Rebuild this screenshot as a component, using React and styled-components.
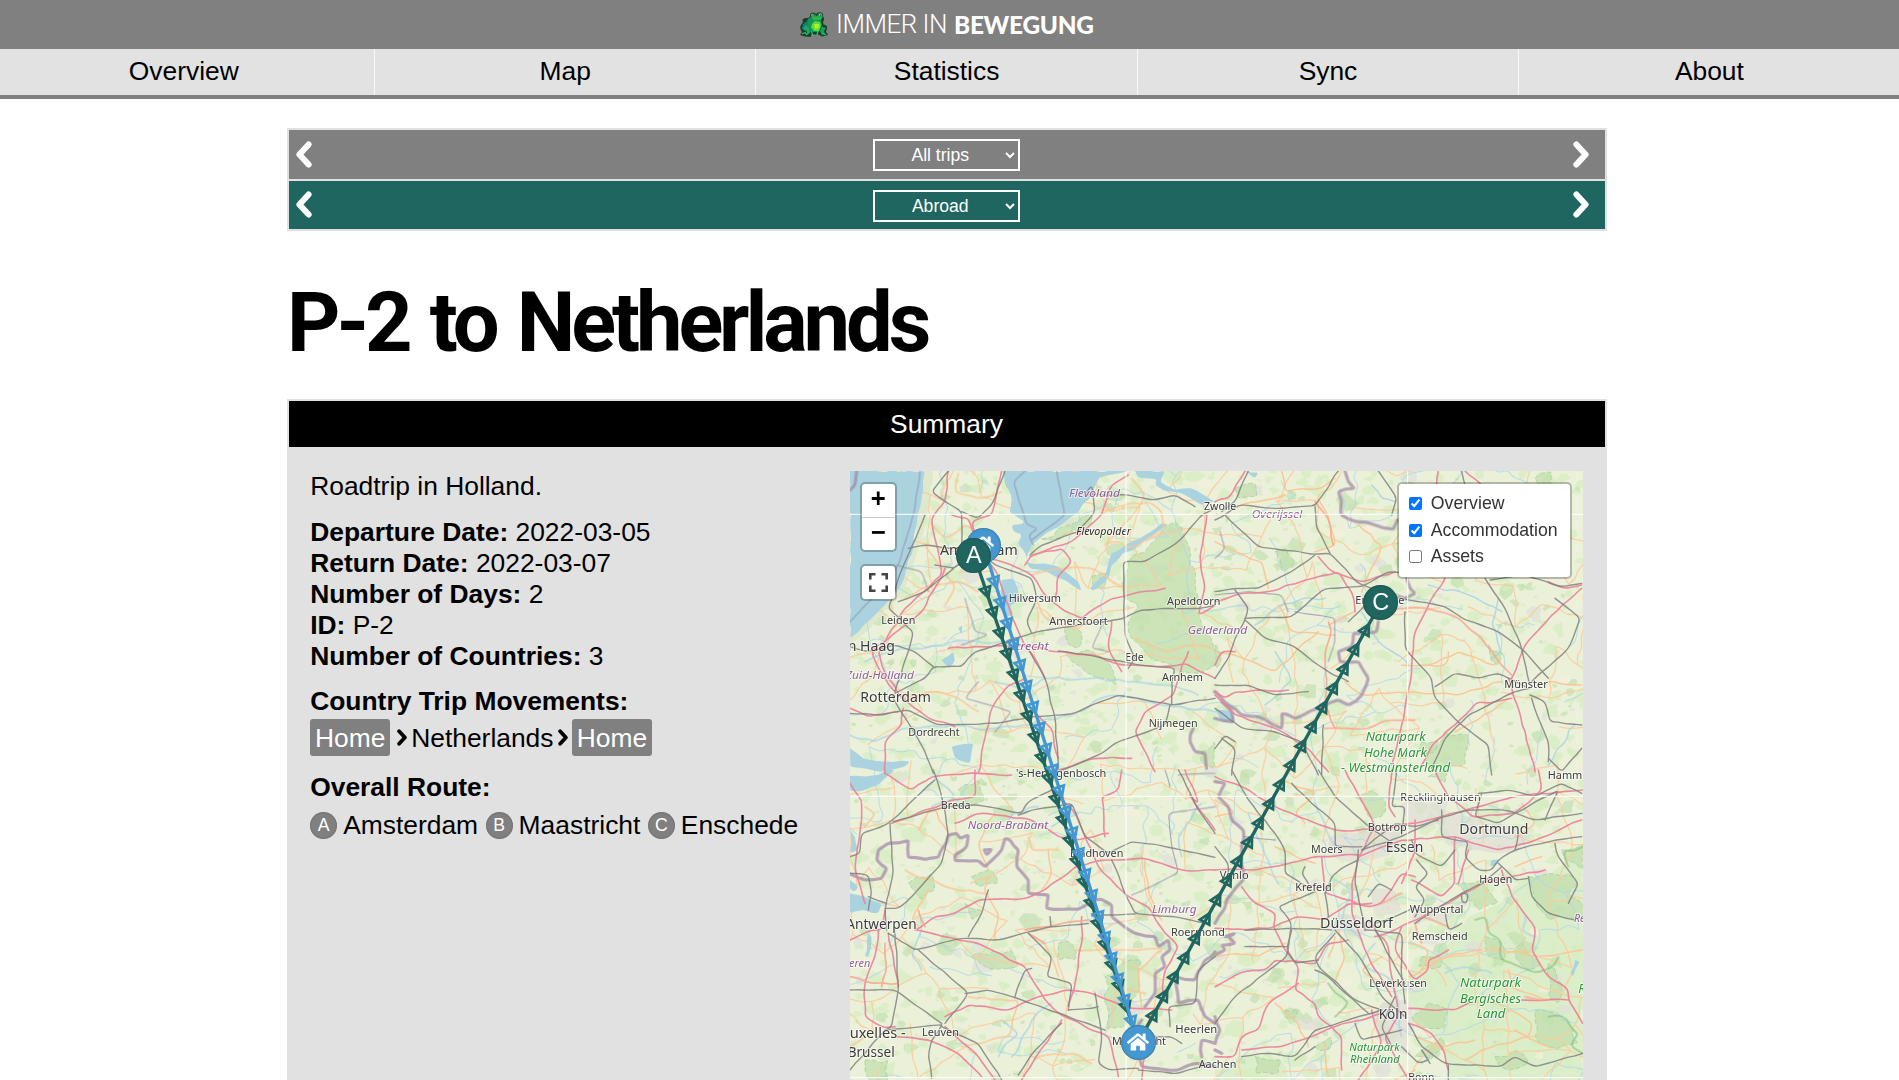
import React from "react";
import styled, { createGlobalStyle, css } from "styled-components";
import { FaHome } from "react-icons/fa";

const GREY = "#808080";
const LIGHT = "#e1e1e1";
const TEAL = "#1f6660";
const BLUE = "#4497d1";

const GlobalStyle = createGlobalStyle`
  * { box-sizing: border-box; }
  html, body { margin: 0; padding: 0; height: 1080px; overflow: hidden; background: #fff; }
  body { font-family: "Liberation Sans", Arial, sans-serif; font-size: 26.4px; color: #000; }
`;

const Page = styled.div`
  height: 1080px;
  overflow: hidden;
`;

const Header = styled.header`
  height: 49px;
  background: ${GREY};
  color: #fff;
  display: flex;
  justify-content: center;
  align-items: center;
  padding-right: 6px;
`;

const Brand = styled.div`
  display: flex;
  align-items: center;
  white-space: pre;
`;

const BrandLight = styled.span`
  font: 300 26px/49px Roboto, sans-serif;
  width: 111px;
  margin: 0 7px 0 7px;
  letter-spacing: -0.5px;
`;

const BrandBold = styled.span`
  font: 900 24.4px/49px Lato, sans-serif;
  width: 140px;
  margin-top: 0;
  letter-spacing: -0.3px;
`;

const Nav = styled.nav`
  height: 50px;
  background: #e2e2e2;
  border-bottom: 4px solid ${GREY};
  overflow: hidden;
`;

const NavList = styled.div`
  display: grid;
  grid-template-columns: repeat(5, 381.4px);
  margin-left: -6.4px;
  height: 46px;
`;

const NavItem = styled.a`
  text-align: center;
  line-height: 44px;
  border-right: 1px solid #f8f8f8;
`;

const Content = styled.main`
  width: 1320px;
  margin: 29px 0 0 287px;
`;

const Switcher = styled.div`
  background: ${LIGHT};
  padding: 2px;
  display: grid;
  grid-template-rows: 49px 48px;
  row-gap: 2px;
`;

const SwitchRow = styled.div`
  background: ${(p) => p.$color};
  display: flex;
  justify-content: space-between;
  align-items: flex-start;
  padding: 9px 16px 0 6.5px;
`;

const Select = styled.select`
  width: 147px;
  height: 32px;
  border: 2px solid #fff;
  border-radius: 0;
  background: transparent;
  color: #fff;
  font: 17.6px "Liberation Sans", Arial, sans-serif;
  text-align: center;
  margin: 0 0 0 8px;
`;

const Title = styled.h1`
  margin: 43px 0 0 0;
  padding-top: 1px;
  height: 125px;
  font: 700 83px/96px Roboto, sans-serif;
  letter-spacing: -4.1px;
  word-spacing: 4.8px;
  white-space: nowrap;
`;

const Card = styled.section`
  background: ${LIGHT};
  padding: 2px;
  height: 720px;
`;

const CardTitle = styled.h2`
  margin: 0;
  height: 46px;
  padding-right: 1px;
  background: #000;
  color: #fff;
  font: 26.4px/46px "Liberation Sans", Arial, sans-serif;
  text-align: center;
`;

const CardBody = styled.div`
  display: grid;
  grid-template-columns: 539.6px 733px;
  padding: 24px 0 0 21.2px;
`;

const Facts = styled.div`
  line-height: 31px;
  white-space: nowrap;
`;

const Block = styled.div`
  margin-bottom: 14.5px;
`;

const Movements = styled.div`
  display: flex;
  align-items: center;
  height: 37px;
  margin: 2px 0 16px;
`;

const Tag = styled.span`
  background: ${GREY};
  color: #fff;
  border-radius: 3px;
  padding: 0 4.8px;
  height: 37px;
  line-height: 38px;
`;

const Place = styled.span`
  padding-top: 1px;
`;

const Route = styled.div`
  display: flex;
  align-items: center;
  height: 31px;
  margin-top: 7px;
`;

const Letter = styled.span`
  width: 27px;
  height: 27px;
  border-radius: 50%;
  background: ${GREY};
  box-shadow: inset 0 0 2px rgba(0, 0, 0, 0.35);
  color: #fff;
  font-size: 17.6px;
  line-height: 27px;
  text-align: center;
  margin-right: 6px;
`;

const Stop = styled.span`
  margin-right: 7.5px;
`;

const MapFrame = styled.div`
  position: relative;
  width: 733px;
  height: 609px;
  overflow: hidden;
  background: #eff1d9;
`;

const MapSvg = styled.svg`
  display: block;
`;

const Pin = styled.div`
  position: absolute;
  left: ${(p) => p.$x - 17.5}px;
  top: ${(p) => p.$y - 17.5}px;
  width: 35px;
  height: 35px;
  border-radius: 50%;
  background: ${(p) => p.$color};
  box-shadow: inset 0 0 2px rgba(0, 0, 0, 0.5);
  color: #fff;
  font-size: 23.5px;
  line-height: 35px;
  display: flex;
  justify-content: center;
  align-items: center;
`;

const control = css`
  position: absolute;
  background: #fff;
  background-clip: padding-box;
  border: 2px solid rgba(0, 0, 0, 0.24);
  border-radius: 5px;
`;

const Zoom = styled.div`
  ${control}
  left: 10px;
  top: 11px;
  width: 37px;
  height: 70px;
`;

const ZoomButton = styled.div`
  height: 33px;
  font: 700 24px/29px "DejaVu Sans Mono", monospace;
  text-align: center;
  & + & { border-top: 1px solid #ccc; }
`;

const Fullscreen = styled.div`
  ${control}
  left: 10px;
  top: 93px;
  width: 37px;
  height: 37px;
  display: flex;
  justify-content: center;
  align-items: center;
`;

const Layers = styled.div`
  ${control}
  left: 547px;
  top: 11px;
  width: 175px;
  height: 97px;
  padding: 6.6px 0 0 10px;
  display: flex;
  flex-direction: column;
`;

const Layer = styled.label`
  display: flex;
  align-items: center;
  height: 26.5px;
  font-size: 17.7px;
  color: #333;
  gap: 9px;
  input { margin: 0; width: 13px; height: 13px; }
`;

const Chevron = ({ right, small }) => (
  <svg width={small ? 10 : 16} height={small ? 17 : 27} viewBox="0 0 16 27">
    <path
      d={right ? "M3.4 3.4 L12.6 13.5 L3.4 23.6" : "M12.6 3.4 L3.4 13.5 L12.6 23.6"}
      fill="none"
      stroke={small ? "#000" : "#fff"}
      strokeWidth="6"
      strokeLinecap="round"
      strokeLinejoin="round"
    />
  </svg>
);

const Arrow = styled.span`
  display: flex;
  margin-top: ${(p) => p.$top}px;
`;

const Frog = () => (
  <svg width="30" height="27" viewBox="0 0 30 27">
    <path d="M4 11 Q2 7.5 7 7 Q11 7 11 5 Q11 1.5 14 1.5 Q16 1.5 17 3 Q19 .5 22 1.5 Q25 2.5 24 5 Q26 8 24 11 L24.5 13.5 Q29 14 28 18 Q26 21 28 22 L29 24 L23 25.5 L19 23.5 L12 23.5 L12 26 L6 25.5 L1 24 L3 21 Q0 17 2 14 Z" fill="#17402a" />
    <path d="M12 6 L12 3.4 L16 3.4 L18 5 L19 2.6 L23 2.6 L24 6 L22 9 L23 14 L20 21 L12 21 L8 17 L7 12 L9 8 Z" fill="#12935a" />
    <path d="M13 5.6 L23 5.6 L21.5 9 L14 9 Z" fill="#2fb54a" />
    <path d="M13 13 L16 10 L21 11 L22 15 L20 20 L15 20 L12 16.5 Z" fill="#62d92f" />
    <path d="M15 13 L20 13 L20 17 L16 18 Z" fill="#a5f13c" />
    <path d="M4 13 L9 9.5 L9 15 L12 20 L8 21 L3 18 Z" fill="#12806d" />
    <path d="M7 14 L10 17 L11 22 L8 24 L8 19.5 L4 18 Z" fill="#1fa862" />
    <path d="M23 15.5 L27 17 L25 20 L26 23 L23 24 L21 20 Z" fill="#15a25e" />
    <path d="M3 23 L6 21.5 L8 24 M12 20 L14 24 M19 20 L18 24 M23 22 L27 24" stroke="#2bbd63" strokeWidth="1.3" fill="none" />
    <circle cx="13.8" cy="4" r="1.3" fill="#cfe7b0" />
    <circle cx="21.3" cy="3.8" r="1.3" fill="#cfe7b0" />
    <circle cx="14" cy="4.1" r=".8" fill="#102a18" />
    <circle cx="21.5" cy="4" r=".8" fill="#102a18" />
  </svg>
);

/* ---------- map drawing: each sheet is a quarter of the canvas ---------- */

const parse = (s) => s.trim().split(/\s+/).map((p) => p.split(",").map(Number));

/* Rounds only the corners of a polyline, by at most `radius`. */
const smooth = (pts, radius = 22) => {
  let d = `M${pts[0][0]} ${pts[0][1]}`;
  const toward = (a, b) => {
    const len = Math.hypot(b[0] - a[0], b[1] - a[1]) || 1;
    const k = Math.min(radius / len, 0.5);
    return `${(a[0] + (b[0] - a[0]) * k).toFixed(1)} ${(a[1] + (b[1] - a[1]) * k).toFixed(1)}`;
  };
  for (let i = 1; i < pts.length - 1; i++) {
    d += `L${toward(pts[i], pts[i - 1])}Q${pts[i].join(" ")} ${toward(pts[i], pts[i + 1])}`;
  }
  return d + `L${pts[pts.length - 1].join(" ")}`;
};

const makeRandom = (seed) => () => {
  seed = (seed * 1664525 + 1013904223) % 4294967296;
  return seed / 4294967296;
};

/* Adds small irregular bends so that long segments read as surveyed lines. */
const roughen = (pts, amp, seed) => {
  const rnd = makeRandom(seed + pts[0][0] * 7 + pts[0][1] * 13);
  const out = [pts[0]];
  for (let i = 1; i < pts.length; i++) {
    const [a, b] = [pts[i - 1], pts[i]];
    const n = Math.max(1, Math.round(Math.hypot(b[0] - a[0], b[1] - a[1]) / 26));
    for (let j = 1; j < n; j++) {
      out.push([
        Math.round(a[0] + ((b[0] - a[0]) * j) / n + (rnd() - 0.5) * amp),
        Math.round(a[1] + ((b[1] - a[1]) * j) / n + (rnd() - 0.5) * amp),
      ]);
    }
    out.push(b);
  }
  return out;
};

const blobs = (() => {
  const rnd = makeRandom(11);
  return Array.from({ length: 2600 }, () => {
    const x = 15 + rnd() * 2200;
    const y = 18 + rnd() * 1830;
    const r = 4 + rnd() * rnd() * 22;
    const pts = Array.from({ length: 7 }, (_, i) => {
      const a = (i / 7) * Math.PI * 2;
      const q = r * (0.5 + rnd());
      return `${Math.round(x + Math.cos(a) * q * 1.3)},${Math.round(y + Math.sin(a) * q)}`;
    });
    const pick = rnd();
    return { pts: pts.join(" "), fill: pick < 0.74 ? "#d5ecc1" : pick < 0.87 ? "#c3dfb0" : pick < 0.94 ? "#e0deda" : "#f4f0dc" };
  });
})();

const lattice = (seed, step, amp, keep) => {
  const rnd = makeRandom(seed);
  const cols = Math.ceil(2300 / step);
  const rows = Math.ceil(1950 / step);
  const grid = [];
  for (let j = 0; j <= rows; j++) {
    grid.push([]);
    for (let i = 0; i <= cols; i++) {
      grid[j].push([Math.round(i * step + (rnd() - 0.5) * step), Math.round(j * step + (rnd() - 0.5) * step)]);
    }
  }
  const out = [];
  const add = (a, b) => out.push(smooth(roughen([a, b], amp, out.length), 12));
  for (let j = 0; j < rows; j++) {
    for (let i = 0; i < cols; i++) {
      if (rnd() < keep) add(grid[j][i], grid[j][i + 1]);
      if (rnd() < keep) add(grid[j][i], grid[j + 1][i]);
    }
  }
  return out;
};

const lanes = lattice(5, 112, 15, 0.5);
const streams = lattice(29, 130, 24, 0.34);

const sheets = [
  {
    at: [0, 0],
    green: [
      "850,290 900,262 950,200 990,170 1030,240 1050,350 1062,450 1110,560 1112,600 1060,625 1000,620 950,590 900,560 850,500 880,420 838,400 835,340",
      "660,560 740,558 780,580 815,660 760,640 720,620 680,590",
      "590,222 640,190 740,150 740,175 670,205 620,225",
      "1070,860 1110,830 1110,910 1080,900", "740,335 780,320 780,370 745,370", "660,480 710,500 700,550 670,540",
    ],
    dunes: ["240,18 262,18 250,120 235,200 215,270 190,340 160,400 110,450 15,545 15,515 100,440 150,390 180,330 205,240 218,150 235,75"],
    water: [
      "15,18 240,18 235,75 218,150 205,240 180,330 150,390 100,440 15,520",
      "474,18 480,60 500,100 493,140 540,172 500,180 505,200 530,208 520,240 545,275 540,290 560,240 590,215 650,180 700,140 735,100 752,60 765,35 850,18",
      "870,18 960,18 945,50 990,75 1040,70 1110,110 1070,120 1010,85 960,78 930,60 935,42 880,38",
      "545,292 600,295 640,305 700,350 710,378 660,345 610,322 555,312",
      "800,265 840,240 900,210 950,175 970,180 900,225 860,258 835,262 800,300 790,340 745,378 735,370 780,330",
      "470,345 505,340 520,375 520,410 495,420 505,450 480,455 465,430", "290,585 325,560 330,590 310,610", "320,845 385,835 375,895 330,880",
      "15,850 55,880 115,890 195,890 180,905 100,920 15,905", "300,330 312,320 308,345", "340,490 352,480 350,510",
    ],
    rail: [
      "500,590 480,530 560,505 700,480 830,462 890,435 960,430 1060,430 1110,420", "270,300 330,310 350,290 240,380 160,410", "150,680 190,560 205,500 130,430 160,340 240,150",
      "150,685 240,640 265,605 350,605 390,560 500,525", "560,505 545,470 575,400 560,340 450,300 380,245", "15,745 110,750 190,735 280,780 450,775 560,755 690,745 740,720 820,690 980,720 1110,700",
      "980,720 980,650 990,610 880,600 740,572 640,558", "850,610 870,580 840,510 835,290 900,290 1000,230 1070,150 1110,130", "640,910 630,760 600,640 555,560", "190,250 240,240 320,250", "265,925 240,860 200,790 140,690",
      "700,200 750,140 740,60 720,90 850,90 920,105 990,90 1050,125", "640,920 760,870 820,830 880,810 960,780 975,720", "310,18 260,80 350,140 350,240", "480,18 440,120 400,160 350,140", "555,270 590,240 700,200", "15,545 70,560 150,540 210,560 265,605",
    ],
    motor: [
      "310,18 300,110 260,160 265,200 290,330 180,430 100,560 110,600 160,690 250,760 330,785", "470,18 440,150 380,170 400,230 420,260", "400,270 500,300 560,330 600,390 660,440 710,460", "420,280 460,330 480,400 520,500 600,640",
      "310,550 410,545 520,540 640,560 750,570 830,600 950,605 1020,595 1110,640", "630,400 640,330 680,290 650,250 560,270 540,300", "555,275 680,230 770,150 800,60 850,30", "710,460 800,400 850,390 960,370", "800,470 790,550 830,620",
      "120,925 120,830 170,780 175,730", "15,730 70,755 160,740", "400,925 420,820 440,730 490,660 540,640", "1085,150 1065,270 1080,370 1060,450 1110,420", "640,915 750,880 860,880", "930,920 870,800 900,740 985,690 1010,600 1030,560", "560,730 620,790 640,880", "150,680 100,610 80,560 180,480 230,440 300,310", "320,150 370,160 400,240",
    ],
    orange: [
      "340,25 330,80 400,100 470,80", "260,180 300,220 360,180 380,190", "765,150 840,120 910,110 950,140 960,190 860,250 820,230 780,240", "560,330 640,310 740,310 850,380", "860,40 900,90 870,140 780,240",
      "240,240 280,300 330,360 300,420", "180,400 230,370 340,350 400,380", "570,400 600,460 640,480 700,490", "870,520 960,560 1040,540 1100,550", "170,700 260,680 340,700 400,740",
    ],
    border: ["1045,790 1035,830 1050,860 1080,865 1085,910", "35,18 30,60 15,75"],
    thin: ["225,18 210,130 160,300 110,370 15,470", "540,18 505,50 545,180 580,190 550,210 565,240", "635,18 660,150 560,225", "360,400 390,500 430,510 350,540", "400,650 360,700 500,740 450,800", "770,480 740,550 790,560", "155,300 230,320 250,380"],
    river: ["15,810 90,830 170,790 320,780 440,790 560,780 700,740 800,690 900,710 1110,740", "450,650 520,670 620,640 740,640 860,650 960,660 1060,690", "60,590 140,560 240,550 320,530 480,530", "430,290 460,360 500,490"],
  },
  {
    at: [1110, 0],
    green: ["60,70 120,55 125,95 70,100", "0,540 20,570 15,600 0,610", "690,800 760,810 750,900 640,900 640,860", "620,830 670,825 660,860 610,860", "960,40 1010,20 1020,110 990,90", "180,260 215,250 240,290 200,320", "820,540 860,560 850,600 830,590"],
    water: ["90,18 130,22 120,40", "0,735 50,740 60,775 20,770"],
    rail: ["0,165 30,150 70,120 180,130 300,122 370,18", "100,18 60,110 20,140", "30,150 130,245 300,268 345,265 430,355 550,400 690,425 750,465 850,500 930,560 1000,640", "300,125 305,190 345,265", "0,380 60,370 130,370 230,320 300,270", "60,375 100,430 90,465 60,520 40,580 0,640", "90,460 230,455 330,370 440,365 520,320 620,330", "90,465 150,520 230,540 340,620 400,650", "450,420 400,470", "570,440 570,550 650,640 660,700 740,780 820,840 830,930", "810,340 870,430 920,550 945,660", "950,700 970,760 1000,830 1000,890", "945,670 900,680 760,750 690,820 650,910", "950,650 1060,550 1095,460 1020,400", "945,690 990,710 1005,770 1100,780", "660,665 720,625 790,640 850,625 930,665", "0,660 100,660 180,690 280,680", "0,730 80,790 180,800 260,830 310,930", "20,820 60,850 50,930", "825,345 930,330 1040,365 1100,355", "490,18 545,100 530,150", "740,18 750,60", "1100,850 1040,920 1000,880", "0,850 30,810 60,830", "325,780 320,930"],
    motor: ["0,600 20,560 60,560", "90,18 40,100 0,110", "0,410 60,390 160,380 270,345 370,320 410,380 420,440", "310,275 350,320 440,350 540,320", "670,18 665,110", "690,340 650,400 600,500 590,620 560,780 530,900", "890,640 930,540 1010,450 1100,370", "880,640 910,730 960,920", "890,700 820,715 790,710 720,780 660,830 620,900", "0,680 30,700 60,680 220,675", "0,690 60,750 180,790 280,850 340,920", "750,18 800,60", "1000,350 1050,370 1100,360"],
    salmon: ["440,430 640,430 730,460 800,520 850,590 890,630", "330,790 460,790 520,765 600,765", "340,470 350,500 330,560 335,640 330,720 360,790", "300,110 340,160 355,240"],
    orange: ["0,230 60,260 140,290 160,370", "200,18 210,80 320,70 360,40", "210,90 130,110 60,130", "440,380 500,240 430,180", "300,260 360,240 340,150 310,100", "420,440 340,480", "640,600 730,560 840,600", "390,650 440,690 600,680 720,690 860,650", "1000,650 1100,660", "700,560 690,600 560,600", "0,560 60,570 180,620 310,500", "720,800 830,740 880,700", "190,420 230,500 360,510"],
    border: ["390,18 400,50 418,70 370,80 380,110 378,150 425,170 480,180 535,192 547,165", "575,340 585,370 600,385 570,400 540,390", "490,470 485,500 415,505 410,545 370,560 375,590 430,590 460,640 440,690 400,720 370,705 310,730 240,760 200,745 200,790 130,755 80,750 20,700 0,680", "0,760 55,770 50,740 20,710"],
    thin: ["15,200 30,250 0,280", "0,390 100,380 200,390 220,440", "240,440 360,460 360,530 340,590"],
    river: ["470,60 500,100 540,110", "120,480 180,430 260,400 330,400", "850,400 830,480 860,560 830,580", "440,440 500,540 580,600", "180,560 230,650 150,720", "1000,900 1080,780", "640,360 760,390 860,440"],
  },
  {
    at: [0, 915],
    green: ["780,620 830,580 890,570 885,650 850,700 840,770 780,775 790,720", "190,340 260,310 270,360 230,390", "380,320 440,300 460,340 400,350", "380,560 500,540 520,590 420,590", "640,520 680,520 690,570 640,570", "60,870 130,870 130,930 70,930", "340,60 400,30 420,90 370,110", "360,400 410,420 380,450"],
    water: ["15,18 60,20 100,15 125,0 150,0 125,20 100,45 60,60 15,62", "15,180 30,200 40,240 15,250", "15,370 60,380 110,400 100,430 60,420 15,430", "70,490 80,500 70,560 60,560", "15,330 40,350 30,365 15,360"],
    rail: ["265,0 290,80 310,190 290,280 200,380 160,415 120,415", "270,30 130,160 50,190 45,250 15,260", "135,160 145,310 120,420 125,480", "145,155 300,110 400,105 530,130 550,95 620,60", "520,135 560,120 680,100 720,200 790,250 860,215 960,230 1110,262", "800,270 840,370 870,430 990,440 1090,460", "740,438 870,432", "730,460 620,470 460,510 380,505 350,505 210,540 130,490", "430,360 410,430 370,500", "220,540 370,670 350,700 300,760", "550,490 620,560 605,620 680,640 670,710", "360,670 430,660 500,680 600,715 670,740 780,780", "510,680 540,600 560,595", "15,660 150,660 290,760", "150,490 160,660 140,770 120,780 15,900", "120,780 290,765", "290,765 260,810 250,860 260,925", "290,770 400,820 470,930", "520,915 570,840 650,760", "750,670 770,800 760,880 790,900 880,895", "670,720 740,715 760,710", "15,310 70,315 80,370 70,420", "70,380 125,400", "1000,0 1060,120 1110,190", "1110,560 1060,600 1050,700 970,710 975,770", "900,800 980,800 1010,820", "880,900 1000,910 1070,890", "615,440 618,470"],
    motor: ["15,40 50,90 45,180 30,290 60,400", "390,0 390,80 320,90 140,160", "120,10 200,60 260,20 400,10 500,15", "620,60 690,130 760,290 850,380 910,410 960,490 1000,530 960,600 950,700", "330,160 400,130 560,150 640,200 700,210 790,190", "830,0 820,60 770,80 780,200", "1110,300 1010,300 900,265 780,270 690,290 600,360 540,385 400,390 330,430 270,440 210,480", "215,480 400,520 540,590 600,690 640,730 720,770 790,800 820,920", "130,490 150,600 160,650", "300,740 370,705 490,720 580,680 660,660 740,670 860,715 980,720", "100,480 90,560 60,640 60,740 110,770 150,770", "300,770 400,860 450,930", "650,750 580,850 530,930", "15,510 80,480 110,480 120,420", "710,440 710,520 690,640 670,720", "1020,0 1060,100 1030,70 1110,180", "900,860 890,930", "150,800 250,810 340,850 410,920"],
    salmon: ["550,490 600,520", "240,470 220,420", "15,620 90,640 160,640", "540,480 650,460 730,450", "120,520 125,600 110,650"],
    orange: ["60,110 90,130 60,170", "250,360 200,450 220,470", "430,320 420,370 460,430 450,510", "430,370 300,350 180,300", "550,200 560,240 640,240", "590,360 620,310 610,240", "690,540 800,540 950,535", "370,680 440,690 520,690 490,800 350,830", "580,860 680,850 740,880", "950,540 880,600 890,710", "220,180 260,110 310,190", "450,130 400,220 430,300", "560,500 600,520 640,620", "15,830 60,800", "900,270 910,370 950,450", "820,650 900,670"],
    border: ["15,312 60,330 110,325 125,295 95,270 100,240 130,220 190,212 190,262 240,268 280,262 310,195 335,190 345,205 370,195 365,230 330,255 330,272 400,272 420,290 470,240 480,205 495,210 520,240 515,290 550,330 550,370 610,375 605,415 700,418 740,390 770,388 800,405 800,440 870,490 930,500 940,530 970,510 975,540 950,560 960,590 930,610 930,670 900,710", "890,750 860,790 890,890 1000,900 1050,880 1110,890", "1110,545 1080,570 1050,630 990,620 1000,700 1060,690 1080,740 1110,760", "1110,820 1070,810 1070,860", "418,240 440,238 425,255 418,240"],
    thin: ["1110,110 970,130 980,230 1000,310 860,375", "960,0 975,50", "1110,10 1000,15"],
    river: ["15,20 60,40 110,20", "270,20 330,80 260,110", "500,860 560,750 620,700", "470,750 520,790 460,860", "230,480 200,560 230,600", "1010,260 1000,200 1070,100", "480,180 500,130 580,110", "620,170 700,130"],
  },
  {
    at: [1110, 915],
    hills: ["560,640 600,560 680,540 760,440 860,400 920,320 1000,320 1103,220 1103,930 700,930 680,820 600,740", "0,900 100,850 200,870 220,930 0,930"],
    green: ["940,320 1060,310 1090,340 1060,370 1103,400 1103,440 1000,450 960,390", "420,80 470,60 510,90 500,140 460,140", "640,700 700,720 690,770 620,770 590,740", "810,500 860,520 870,570 820,560", "920,520 980,580 940,600 900,560", "620,560 680,560 680,590 610,590", "210,720 250,715 240,745 210,745", "600,860 680,800 680,840 650,870", "1000,580 1040,640 1030,700 1000,680", "840,860 900,840 940,880 880,900", "640,20 700,0 690,40", "1040,240 1103,220 1103,300 1050,270", "960,720 1060,760 1090,820 1000,830 960,800", "120,860 200,870 190,910 120,910", "720,340 800,330 850,400 790,420", "300,830 350,800 340,840"],
    urban: ["340,200 470,180 560,190 520,260 430,280 350,260", "660,140 760,140 900,170 950,200 900,250 780,240 690,220", "500,700 580,690 600,760 560,850 490,800 470,740", "370,430 450,440 480,470 430,500 360,480", "590,430 700,430 740,390 760,400 690,460 590,450", "560,100 700,90 680,160 580,180", "460,360 540,360 560,420 480,440", "240,750 320,740 320,790 260,780"],
    water: ["830,270 855,268 845,285 825,290", "1080,570 1095,575 1075,620 1065,610"],
    rail: ["310,0 360,80 450,160 520,210", "230,40 280,90 340,140 360,160 360,230 440,230", "0,230 40,280 40,330", "50,0 100,90 180,190 210,240 210,310 290,360", "330,370 350,320 380,295 430,270", "430,240 420,340 440,430 450,480", "440,240 560,200 660,150 760,120 870,120 960,150 1100,130", "560,195 570,110 530,110 545,0", "670,150 600,170 540,160 440,240", "680,120 680,200 760,215 750,260 790,300 830,300 850,270 900,240 1000,215 1100,200", "330,370 340,440", "360,480 440,570 500,680 570,740", "450,480 560,490 560,620 570,700", "480,480 540,590 570,640", "850,280 900,330 940,325", "790,70 880,60 960,80 1040,40 1100,70", "800,70 780,140 850,160 900,130 1030,60 990,150", "900,240 910,190", "1020,220 1030,260 1060,300 1090,340 1060,400", "350,480 210,475 90,480", "90,530 215,530", "360,490 300,560 310,590 420,690 500,720", "300,365 190,410 230,460 215,560 150,610 60,680 0,760", "230,480 215,540 240,580 310,570", "500,720 400,750 300,780 240,860 150,850 80,860", "460,730 380,660 340,620 300,600", "580,760 620,830 690,880 860,890 900,860 960,890 1103,850", "700,885 700,930", "540,680 500,770 530,830", "645,880 620,840", "420,760 440,810 560,780", "600,460 690,400 740,370 800,340 860,290", "605,270 640,310 600,350 630,390 600,440", "590,210 600,250 680,290 720,240", "600,410 540,440 480,460", "460,380 490,340 530,360", "740,370 760,370 755,400 740,395 740,370", "690,420 700,480 740,460", "560,830 610,880 640,870", "270,290 260,310 280,340", "240,870 300,830", "940,320 950,380 1000,430 1080,450"],
    motor: ["0,20 80,50 180,110 300,160 360,180 500,180 640,150 900,80 1103,60", "390,0 450,110 480,170 430,260 410,340 410,430 440,510 480,600 530,680", "660,0 700,80 770,140 900,130 980,60 970,0", "0,300 90,300 180,290 300,260 430,255", "320,260 330,370 460,410 500,400 560,310 600,320", "430,260 560,210 720,200 850,240 940,220 1100,150", "720,200 720,340 680,380 590,330", "860,300 890,380 960,470 950,540 1000,620 1060,660 1060,690 1103,760", "760,240 730,340", "80,350 120,400 180,430 175,470 210,540 250,590 240,660 300,700 310,740 380,800 380,900", "0,475 100,480 180,470 240,440 330,450 400,400 470,400", "0,650 70,610 150,600 180,570 300,580", "250,640 160,700 130,780 80,800 60,860 0,860", "460,450 520,530 530,620 550,740 510,800 540,860 580,930", "560,470 540,540 600,630 640,600 640,570 700,540", "480,500 540,480 700,400 800,340 890,320 990,300", "580,760 650,790 690,850 700,900", "580,715 640,720 720,720 760,700", "920,690 1060,690", "300,580 340,520 400,510", "470,720 500,820 470,870 430,930", "80,840 200,830 260,810 360,770 500,730", "530,0 520,110 540,140", "600,150 600,250 560,340"],
    salmon: ["600,460 620,520", "560,370 500,400", "1000,690 930,680", "620,440 700,470"],
    orange: ["200,30 300,70 240,130 270,160", "0,90 60,130 0,140", "370,480 390,560 360,640", "340,560 360,500", "330,820 340,920", "800,540 720,550 620,600", "830,530 960,560 1103,540", "880,600 890,650 1000,690", "770,700 850,700 950,760 940,800 800,840 750,870", "920,100 960,160 900,200", "180,230 270,270 300,280", "0,560 60,550 130,560 210,520", "180,700 250,760 280,830", "600,800 690,830 780,810", "980,260 900,290", "580,620 620,600 640,540 580,520", "900,780 1000,830", "500,560 440,600 500,640", "540,930 600,900"],
    border: ["0,35 30,40 10,80 40,110 50,150 85,180 80,250 85,330 50,370 0,460", "0,555 30,540 20,525 60,520 40,500 60,490 30,500", "0,820 15,780 0,740", "0,840 20,850"],
    thin: ["85,200 180,210"],
    park: ["780,450 810,440 820,490 860,520 860,570 940,600 990,600 1030,560", "340,640 400,700 360,740", "1103,230 1050,240 1060,290", "1000,740 1030,735 1090,790 1070,830 1103,850"],
    river: ["100,130 160,270 190,340", "300,100 330,160 360,230", "360,330 410,370 380,450 440,510", "480,520 440,580 520,620 550,700 560,800", "620,880 650,850", "930,440 920,480 960,500", "690,610 760,590 830,610"],
  },
];

const strokes = {
  river: { stroke: "#a3d3e4", strokeWidth: 4.5, opacity: 0.8, rough: 14 },
  orange: { stroke: "#fbc693", strokeWidth: 4.5, opacity: 0.95, rough: 10 },
  thin: { stroke: "#8c83a5", strokeWidth: 3.5, opacity: 0.65, rough: 3 },
  park: { stroke: "#7cb97a", strokeWidth: 5, opacity: 0.65, rough: 18 },
  border: { stroke: "#a286a6", strokeWidth: 9.5, opacity: 0.72, rough: 8 },
  motor: { stroke: "#ec7f98", strokeWidth: 4.8, opacity: 0.9, rough: 7 },
  salmon: { stroke: "#fba58c", strokeWidth: 5, opacity: 0.9, rough: 7 },
  rail: { stroke: "#7d7d7d", strokeWidth: 4.2, opacity: 0.82, rough: 4 },
};

const Sheets = ({ children }) =>
  sheets.map((s, i) => <g key={i} transform={`translate(${s.at[0]} ${s.at[1]})`}>{children(s)}</g>);

const toPoly = (s, rough = 12) => {
  const pts = parse(s);
  return smooth(roughen([...pts, pts[0]], rough, 3), 8) + "Z";
};

/* x, baseline, width, font size, text, kind */
const labels = [
  [672, 97, 153, 34, "Flevoland", "region"], [1077, 135, 97, 32, "Zwolle"], [694, 209, 164, 30, "Flevopolder", "isle"],
  [285, 271, 233, 42, "Amsterdam"], [491, 412, 157, 31, "Hilversum"], [109, 477, 102, 31, "Leiden"], [613, 479, 175, 31, "Amersfoort"],
  [8, 558, 142, 40, "n Haag"], [487, 555, 124, 34, "Utrecht", "region"], [841, 588, 55, 31, "Ede"], [966, 421, 160, 31, "Apeldoorn"],
  [1028, 506, 179, 34, "Gelderland", "region"], [2, 642, 205, 34, "Zuid-Holland", "region"], [951, 647, 123, 31, "Arnhem"],
  [46, 711, 212, 42, "Rotterdam"], [190, 813, 154, 31, "Dordrecht"], [911, 785, 147, 31, "Nijmegen"], [513, 935, 271, 31, "'s-Hertogenbosch"],
  [1220, 160, 152, 34, "Overijssel", "region"], [1531, 417, 147, 31, "Enschede"], [1978, 670, 130, 33, "Münster"],
  [1562, 828, 180, 38, "Naturpark", "nature"], [1557, 875, 189, 38, "Hohe Mark", "nature"], [1488, 922, 327, 38, "- Westmünsterland", "nature"],
  [2108, 942, 104, 31, "Hamm"], [287, 1032, 90, 31, "Breda"], [368, 1093, 242, 34, "Noord-Brabant", "region"], [675, 1177, 160, 31, "Eindhoven"],
  [921, 1343, 134, 34, "Limburg", "region"], [4, 1391, 211, 42, "Antwerpen"], [978, 1413, 162, 31, "Roermond"], [12, 1507, 64, 34, "eren", "region"],
  [231, 1712, 111, 31, "Leuven"], [14, 1718, 168, 40, "uxelles -"], [8, 1775, 141, 40, "Brussel"], [801, 1740, 162, 31, "Maastricht"],
  [991, 1705, 126, 31, "Heerlen"], [1061, 1810, 113, 31, "Aachen"], [1666, 1008, 241, 31, "Recklinghausen"], [1568, 1098, 117, 31, "Bottrop"],
  [1843, 1108, 207, 42, "Dortmund"], [1622, 1161, 113, 42, "Essen"], [1398, 1163, 95, 31, "Moers"], [1124, 1243, 87, 31, "Venlo"],
  [1351, 1279, 109, 31, "Krefeld"], [1903, 1254, 99, 31, "Hagen"], [1694, 1345, 161, 31, "Wuppertal"], [1425, 1388, 219, 42, "Düsseldorf"],
  [1700, 1425, 168, 31, "Remscheid"], [1573, 1565, 173, 31, "Leverkusen"], [1601, 1661, 86, 42, "Köln"],
  [1845, 1566, 183, 38, "Naturpark", "nature"], [1845, 1613, 183, 38, "Bergisches", "nature"], [1895, 1660, 86, 38, "Land", "nature"],
  [1513, 1757, 151, 33, "Naturpark", "nature"], [1515, 1795, 149, 33, "Rheinland", "nature"], [1690, 1847, 78, 31, "Bonn"],
  [2187, 1370, 34, 34, "Re", "region"], [2200, 1583, 22, 38, "R", "nature"],
];

const labelColor = { region: "#8f6096", nature: "#2b963a", isle: "#2b2b2b" };

const Label = ({ data: [x, y, w, size, text, kind] }) => (
  <text
    x={x}
    y={y}
    textLength={w}
    lengthAdjust="spacingAndGlyphs"
    fontFamily='"Noto Sans", sans-serif'
    fontSize={size + 1}
    fontStyle={kind ? "italic" : "normal"}
    fill={kind ? labelColor[kind] : "#3c3c3c"}
    stroke="#fff"
    strokeOpacity=".6"
    strokeWidth="6"
    strokeLinejoin="round"
    paintOrder="stroke"
  >
    {text}
  </text>
);

const Leg = ({ from, to, firstY, stepY, count, color }) => {
  const slope = (to[0] - from[0]) / (to[1] - from[1]);
  const angle = (Math.atan2(to[1] - from[1], to[0] - from[0]) * 180) / Math.PI;
  return (
    <g stroke={color} fill="none">
      <path d={`M${from.join(" ")}L${to.join(" ")}`} strokeWidth="10" />
      {Array.from({ length: count }, (_, i) => {
        const y = firstY + i * stepY;
        const x = from[0] + (y - from[1]) * slope;
        return (
          <path key={i} d="M0 0L-31 -16L-31 16Z" strokeWidth="8" strokeLinejoin="miter" transform={`translate(${x.toFixed(1)} ${y.toFixed(1)}) rotate(${angle.toFixed(2)})`} />
        );
      })}
    </g>
  );
};

const CITY_A = [387, 270];
const HOME = [415, 241];
const CITY_B = [880, 1732];
const CITY_C = [1608, 412];

const MapCanvas = () => (
  <MapSvg width="733" height="609" viewBox="15 18 2199 1827">
    <rect x="0" y="0" width="2230" height="1860" fill="#ebf1d9" />
    <Sheets>{(s) => (s.hills || []).map((p, i) => <path key={i} d={toPoly(p)} fill="#dcedca" />)}</Sheets>
    {blobs.map((b, i) => <polygon key={i} points={b.pts} fill={b.fill} opacity=".7" />)}
    <Sheets>
      {(s) => (
        <>
          {(s.urban || []).map((p, i) => <path key={i} d={toPoly(p)} fill="#dddad6" opacity=".6" />)}
          {(s.dunes || []).map((p, i) => <path key={i} d={toPoly(p)} fill="#dfe8cc" />)}
          {s.green.map((p, i) => <path key={i} d={toPoly(p, 20)} fill="#c3dfae" opacity=".75" stroke="#9ccf99" strokeWidth="3" strokeDasharray="14 7" />)}
        </>
      )}
    </Sheets>
    <g fill="none" stroke="#acd8e6" strokeWidth="3.2" opacity=".75">{streams.map((d, i) => <path key={i} d={d} />)}</g>
    <g fill="none" stroke="#fccb9b" strokeWidth="3.8" opacity=".85">{lanes.map((d, i) => <path key={i} d={d} />)}</g>
    <Sheets>{(s) => s.water.map((p, i) => <path key={i} d={toPoly(p, 8)} fill="#aad3df" />)}</Sheets>
    {Object.entries(strokes).map(([kind, { rough, ...look }]) => (
      <g key={kind} fill="none" strokeLinejoin="round" strokeLinecap="round" {...look}>
        <Sheets>{(s) => (s[kind] || []).map((p, i) => <path key={i} d={smooth(roughen(parse(p), rough, i), kind === "border" ? 6 : 14)} />)}</Sheets>
      </g>
    ))}
    {labels.map((l, i) => <Label key={i} data={l} />)}
    <path d="M0 148H2230M0 994H2230M0 1838H2230M843 0V1860M1688 0V1860" stroke="#fff" strokeWidth="3.4" opacity=".85" />
    <Leg from={CITY_A} to={CITY_B} firstY={398} stepY={62.25} count={21} color={TEAL} />
    <Leg from={CITY_B} to={CITY_C} firstY={1633} stepY={-57.75} count={21} color={TEAL} />
    <Leg from={HOME} to={CITY_B} firstY={368} stepY={62.8} count={22} color={BLUE} />
  </MapSvg>
);

const place = ([x, y]) => ({ $x: (x - 15) / 3, $y: (y - 18) / 3 });

const facts = [
  ["Departure Date:", "2022-03-05"],
  ["Return Date:", "2022-03-07"],
  ["Number of Days:", "2"],
  ["ID:", "P-2"],
  ["Number of Countries:", "3"],
];

const ChevronSlot = styled.span`
  display: flex;
  margin: ${(p) => p.$margin};
`;

export default function App() {
  return (
    <Page>
      <GlobalStyle />
      <Header>
        <Brand>
          <Frog />
          <BrandLight>IMMER IN</BrandLight>
          <BrandBold>BEWEGUNG</BrandBold>
        </Brand>
      </Header>
      <Nav>
        <NavList>
          {["Overview", "Map", "Statistics", "Sync", "About"].map((n) => <NavItem key={n}>{n}</NavItem>)}
        </NavList>
      </Nav>
      <Content>
        <Switcher>
          <SwitchRow $color={GREY}>
            <Arrow $top={1.5}><Chevron /></Arrow>
            <Select defaultValue="All trips"><option>All trips</option></Select>
            <Arrow $top={1.5}><Chevron right /></Arrow>
          </SwitchRow>
          <SwitchRow $color={TEAL}>
            <Arrow $top={0.5}><Chevron /></Arrow>
            <Select defaultValue="Abroad"><option>Abroad</option></Select>
            <Arrow $top={0.5}><Chevron right /></Arrow>
          </SwitchRow>
        </Switcher>
        <Title>P-2 to Netherlands</Title>
        <Card>
          <CardTitle>Summary</CardTitle>
          <CardBody>
            <Facts>
              <Block>Roadtrip in Holland.</Block>
              <Block>
                {facts.map(([k, v]) => <div key={k}><b>{k}</b> {v}</div>)}
              </Block>
              <b>Country Trip Movements:</b>
              <Movements>
                <Tag>Home</Tag>
                <ChevronSlot $margin="0 4px 0 7px"><Chevron right small /></ChevronSlot>
                <Place>Netherlands</Place>
                <ChevronSlot $margin="0 4.5px 0 4px"><Chevron right small /></ChevronSlot>
                <Tag>Home</Tag>
              </Movements>
              <b>Overall Route:</b>
              <Route>
                <Letter>A</Letter><Stop>Amsterdam</Stop>
                <Letter>B</Letter><Stop>Maastricht</Stop>
                <Letter>C</Letter><Stop>Enschede</Stop>
              </Route>
            </Facts>
            <MapFrame>
              <MapCanvas />
              <Pin $color={BLUE} {...place(HOME)}><FaHome size={22} /></Pin>
              <Pin $color={TEAL} {...place(CITY_A)}>A</Pin>
              <Pin $color={TEAL} {...place(CITY_C)}>C</Pin>
              <Pin $color={BLUE} {...place(CITY_B)}><FaHome size={22} /></Pin>
              <Zoom>
                <ZoomButton>+</ZoomButton>
                <ZoomButton>−</ZoomButton>
              </Zoom>
              <Fullscreen>
                <svg width="19" height="19" viewBox="0 0 19 19" fill="none" stroke="#444" strokeWidth="2.6">
                  <path d="M1.3 6.5V1.3H6.5M12.5 1.3H17.7V6.5M17.7 12.5V17.7H12.5M6.5 17.7H1.3V12.5" />
                </svg>
              </Fullscreen>
              <Layers>
                <Layer><input type="checkbox" defaultChecked />Overview</Layer>
                <Layer><input type="checkbox" defaultChecked />Accommodation</Layer>
                <Layer><input type="checkbox" />Assets</Layer>
              </Layers>
            </MapFrame>
          </CardBody>
        </Card>
      </Content>
    </Page>
  );
}
